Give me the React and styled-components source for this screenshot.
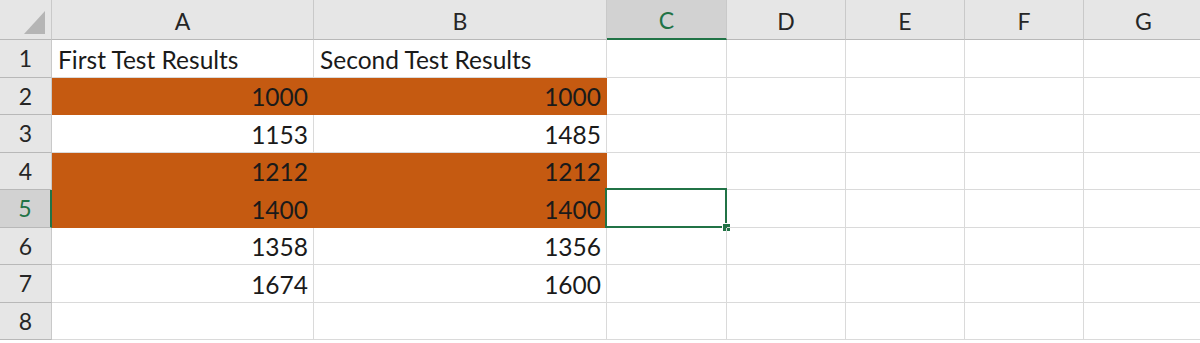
import React from 'react';
import styled, { createGlobalStyle, css } from 'styled-components';

const GlobalStyle = createGlobalStyle`
  html, body {
    margin: 0;
    padding: 0;
    background: #ffffff;
    overflow: hidden;
  }
`;

const columns = ['A', 'B', 'C', 'D', 'E', 'F', 'G'];

const rows = [
  { n: 1, cells: [{ v: 'First Test Results' }, { v: 'Second Test Results' }] },
  { n: 2, fill: true, cells: [{ v: '1000', num: true }, { v: '1000', num: true }] },
  { n: 3, cells: [{ v: '1153', num: true }, { v: '1485', num: true }] },
  { n: 4, fill: true, cells: [{ v: '1212', num: true }, { v: '1212', num: true }] },
  { n: 5, fill: true, cells: [{ v: '1400', num: true }, { v: '1400', num: true }] },
  { n: 6, cells: [{ v: '1358', num: true }, { v: '1356', num: true }] },
  { n: 7, cells: [{ v: '1674', num: true }, { v: '1600', num: true }] },
  { n: 8, cells: [] },
];

const ACTIVE_COL = 'C';
const ACTIVE_ROW = 5;

const App = () => {
  return (
    <>
      <GlobalStyle />
      <Sheet>
        <Corner>
          <CornerTriangle />
        </Corner>
        {columns.map((c) => (
          <ColHeader key={c} $active={c === ACTIVE_COL}>
            {c}
          </ColHeader>
        ))}

        {rows.map((row) => (
          <React.Fragment key={row.n}>
            <RowHeader $active={row.n === ACTIVE_ROW}>{row.n}</RowHeader>
            {columns.map((c, i) => {
              const cell = row.cells[i];
              const filled = row.fill && i < 2;
              const active = c === ACTIVE_COL && row.n === ACTIVE_ROW;
              return (
                <Cell key={c} $fill={filled} $num={cell && cell.num}>
                  {cell ? cell.v : ''}
                  {active && (
                    <Selection>
                      <FillHandle />
                    </Selection>
                  )}
                </Cell>
              );
            })}
          </React.Fragment>
        ))}
      </Sheet>
    </>
  );
};

const Sheet = styled.div`
  display: grid;
  grid-template-columns: 52px 262px 293px 120px 119px 119px 119px 120px;
  grid-template-rows: 40px repeat(8, 37.5px);
  width: 1204px;
  font-family: Lato, 'Liberation Sans', sans-serif;
  font-size: 24.5px;
  color: #1a1a1a;
`;

const headerBase = css`
  background: #e6e6e6;
  border-right: 1px solid #c9c9c9;
  border-bottom: 1px solid #b8b8b8;
  box-sizing: border-box;
  display: flex;
  align-items: center;
  justify-content: center;
  color: #262626;
  font-size: 23px;
`;

const Corner = styled.div`
  ${headerBase};
  position: relative;
`;

const CornerTriangle = styled.div`
  position: absolute;
  right: 6px;
  bottom: 5px;
  width: 0;
  height: 0;
  border-left: 21px solid transparent;
  border-bottom: 23px solid #b5b5b5;
`;

const ColHeader = styled.div`
  ${headerBase};
  padding-top: 2px;
  ${(p) =>
    p.$active &&
    css`
      background: #d2d2d2;
      color: #217346;
      border-bottom: 2px solid #217346;
    `}
`;

const RowHeader = styled.div`
  ${headerBase};
  ${(p) =>
    p.$active &&
    css`
      background: #d2d2d2;
      color: #217346;
      border-right: 2px solid #217346;
    `}
`;

const Cell = styled.div`
  position: relative;
  box-sizing: border-box;
  border-right: 1px solid #dadada;
  border-bottom: 1px solid #dadada;
  display: flex;
  align-items: center;
  padding: 2px 5px 0 6px;
  white-space: nowrap;
  justify-content: ${(p) => (p.$num ? 'flex-end' : 'flex-start')};
  ${(p) =>
    p.$fill &&
    css`
      background: #c55a11;
      border-color: #c55a11;
    `}
`;

const Selection = styled.div`
  position: absolute;
  left: -2px;
  top: -2px;
  right: -1px;
  bottom: -1px;
  border: 2px solid #217346;
  pointer-events: none;
`;

const FillHandle = styled.div`
  position: absolute;
  right: -6px;
  bottom: -6px;
  width: 7px;
  height: 7px;
  background: #217346;
  border: 1px solid #ffffff;
`;

export default App;
